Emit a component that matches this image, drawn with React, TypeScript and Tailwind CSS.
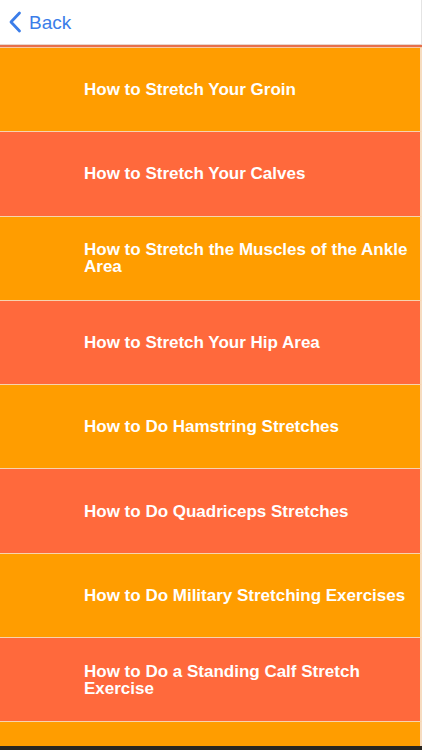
import React from "react";

const items = [
  "How to Stretch Your Groin",
  "How to Stretch Your Calves",
  "How to Stretch the Muscles of the Ankle Area",
  "How to Stretch Your Hip Area",
  "How to Do Hamstring Stretches",
  "How to Do Quadriceps Stretches",
  "How to Do Military Stretching Exercises",
  "How to Do a Standing Calf Stretch Exercise",
  "",
];

export default function App() {
  return (
    <div
      className="w-[422px] h-[750px] overflow-hidden bg-[#2a2620] flex flex-col"
      style={{ fontFamily: "'Liberation Sans', Arial, sans-serif" }}
    >
      {/* Nav bar */}
      <div className="h-[44px] shrink-0 bg-white flex items-center border-r border-[#e4e4e4]">
        <button className="flex items-center pl-[8px] text-[#3b7de9]">
          <svg width="14" height="22" viewBox="0 0 14 22" fill="none">
            <path d="M11.5 2 L3 11 L11.5 20" stroke="#3b7de9" strokeWidth="2.8" strokeLinecap="round" strokeLinejoin="round" />
          </svg>
          <span className="ml-[7px] text-[19px] leading-none">Back</span>
        </button>
      </div>
      <div className="h-px shrink-0 bg-[#e9d6cc]" />
      <div className="h-[2px] shrink-0 bg-[#e66f4c]" />
      <div className="h-px shrink-0 bg-[#f8c9a4]" />

      {/* List */}
      <div className="h-[698px] shrink-0 overflow-hidden">
        {items.map((title, i) => (
          <div
            key={i}
            className={
              "h-[84.3px] box-border border-b border-[#f7d3ae] flex items-center pl-[84px] pr-[10px] border-r-2 border-r-[#f6dcc0] " +
              (i % 2 === 0 ? "bg-[#ff9d00]" : "bg-[#ff693c]")
            }
          >
            {title && (
              <span className="text-white font-bold text-[17px] leading-[17px]">
                {title}
              </span>
            )}
          </div>
        ))}
      </div>
    </div>
  );
}
